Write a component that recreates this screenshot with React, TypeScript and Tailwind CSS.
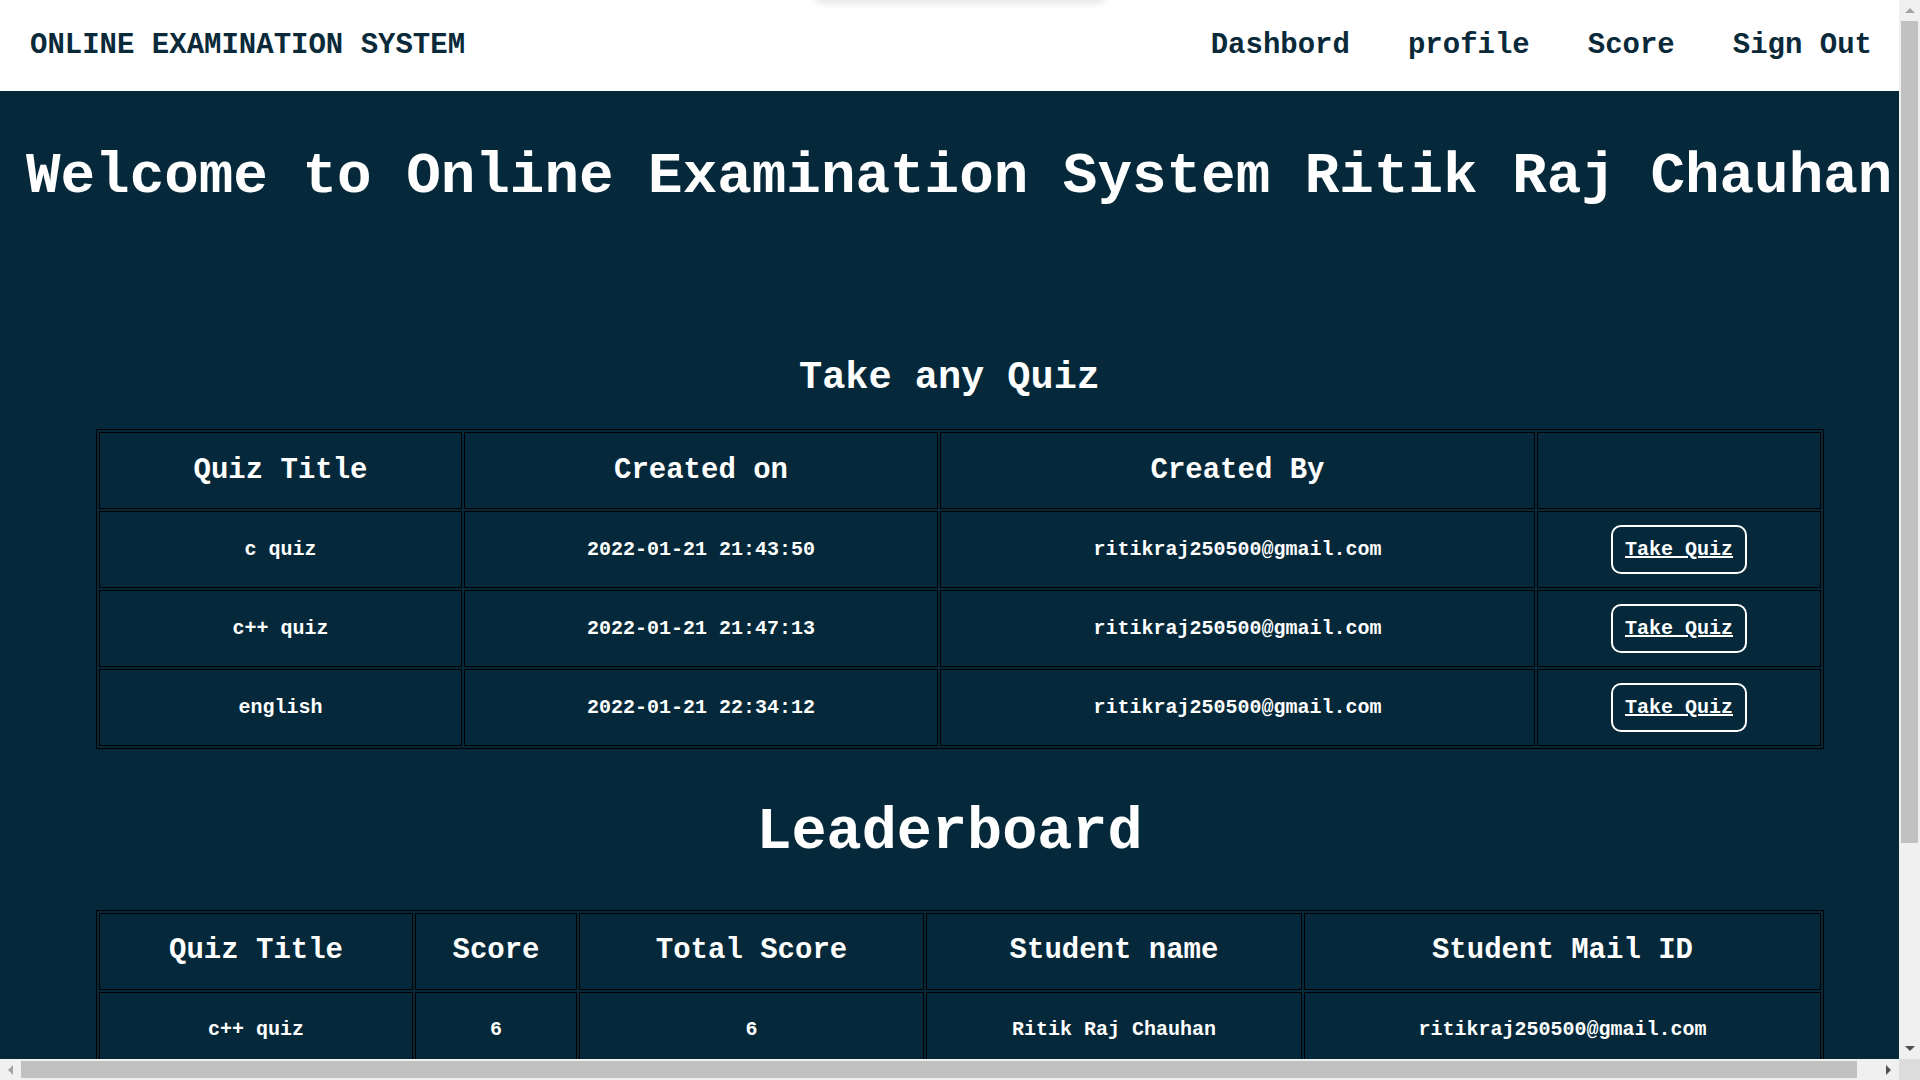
import React from "react";

const quizzes = [
  { title: "c quiz", created: "2022-01-21 21:43:50", by: "ritikraj250500@gmail.com" },
  { title: "c++ quiz", created: "2022-01-21 21:47:13", by: "ritikraj250500@gmail.com" },
  { title: "english", created: "2022-01-21 22:34:12", by: "ritikraj250500@gmail.com" },
];

const scores = [
  { title: "c++ quiz", score: 6, total: 6, name: "Ritik Raj Chauhan", mail: "ritikraj250500@gmail.com" },
];

const navLinks = ["Dashbord", "profile", "Score", "Sign Out"];

const th = "h-[77px] border border-black text-[29px] font-bold text-center align-middle p-0";
const td = "h-[77px] border border-black text-[20px] font-bold text-center align-middle p-0";

function Navbar() {
  return (
    <header className="relative flex h-[91px] shrink-0 items-center justify-between bg-white pl-[30px] pr-[27px] text-[29px] text-[#0a2a3a]">
      {/* stray shadow peeking in at the top */}
      <div className="absolute left-[815px] top-[-30px] h-[30px] w-[290px] rounded-b-md bg-white shadow-[0_2px_10px_rgba(0,0,0,0.13)]" />
      <span className="font-bold">ONLINE EXAMINATION SYSTEM</span>
      <nav className="flex gap-[58px] font-bold">
        {navLinks.map((l) => (
          <a key={l} href="#" className="cursor-pointer">
            {l}
          </a>
        ))}
      </nav>
    </header>
  );
}

function QuizTable() {
  return (
    <div className="pl-[96px]">
      <table className="w-[1728px] table-fixed border-separate border-spacing-[2px] border border-black">
        <thead>
          <tr>
            <th className={`${th} w-[363px]`}>Quiz Title</th>
            <th className={`${th} w-[474px]`}>Created on</th>
            <th className={`${th} w-[595px]`}>Created By</th>
            <th className={`${th} w-[284px]`}></th>
          </tr>
        </thead>
        <tbody>
          {quizzes.map((q) => (
            <tr key={q.title}>
              <td className={td}>{q.title}</td>
              <td className={td}>{q.created}</td>
              <td className={td}>{q.by}</td>
              <td className={td}>
                <button className="inline-flex h-[49px] items-center rounded-[10px] border-2 border-white px-[12px] font-bold underline">
                  Take Quiz
                </button>
              </td>
            </tr>
          ))}
        </tbody>
      </table>
    </div>
  );
}

function Leaderboard() {
  return (
    <div className="pl-[96px]">
      <table className="w-[1728px] table-fixed border-separate border-spacing-[2px] border border-black">
        <thead>
          <tr>
            <th className={`${th} w-[314px]`}>Quiz Title</th>
            <th className={`${th} w-[162px]`}>Score</th>
            <th className={`${th} w-[345px]`}>Total Score</th>
            <th className={`${th} w-[376px]`}>Student name</th>
            <th className={`${th} w-[517px]`}>Student Mail ID</th>
          </tr>
        </thead>
        <tbody>
          {scores.map((s, i) => (
            <tr key={i}>
              <td className={td}>{s.title}</td>
              <td className={td}>{s.score}</td>
              <td className={td}>{s.total}</td>
              <td className={td}>{s.name}</td>
              <td className={td}>{s.mail}</td>
            </tr>
          ))}
        </tbody>
      </table>
    </div>
  );
}

function VScrollbar() {
  return (
    <div className="flex w-[21px] shrink-0 flex-col bg-[#f0f0f0]">
      <div className="flex h-[21px] items-center justify-center">
        <div className="h-0 w-0 border-x-[5px] border-b-[5px] border-x-transparent border-b-[#a3a3a3]" />
      </div>
      <div className="flex-1 px-[2px]">
        <div className="h-[822px] bg-[#c1c1c1]" />
      </div>
      <div className="flex h-[21px] items-center justify-center">
        <div className="h-0 w-0 border-x-[5px] border-t-[5px] border-x-transparent border-t-[#505050]" />
      </div>
    </div>
  );
}

function HScrollbar() {
  return (
    <div className="flex h-[21px] shrink-0">
      <div className="flex flex-1 bg-[#f0f0f0]">
        <div className="flex w-[21px] items-center justify-center">
          <div className="h-0 w-0 border-y-[5px] border-r-[5px] border-y-transparent border-r-[#a3a3a3]" />
        </div>
        <div className="flex-1 py-[2px]">
          <div className="h-full w-[1836px] bg-[#c1c1c1]" />
        </div>
        <div className="flex w-[21px] items-center justify-center">
          <div className="h-0 w-0 border-y-[5px] border-l-[5px] border-y-transparent border-l-[#505050]" />
        </div>
      </div>
      <div className="w-[21px] bg-[#dcdcdc]" />
    </div>
  );
}

export default function App() {
  return (
    <div className="flex h-screen w-screen flex-col overflow-hidden font-['Liberation_Mono','Courier_New',monospace]">
      <div className="flex min-h-0 flex-1">
        <div className="flex min-w-0 flex-1 flex-col overflow-hidden bg-[#05293a]">
          <Navbar />
          <main className="flex flex-col text-white">
            <h1 className="mt-[57px] whitespace-nowrap pl-[26px] text-[57.6px] font-bold leading-none">
              Welcome to Online Examination System Ritik Raj Chauhan
            </h1>
            <h2 className="mt-[153px] text-center text-[38.6px] font-bold leading-none">Take any Quiz</h2>
            <div className="mt-[32px]">
              <QuizTable />
            </div>
            <h2 className="mt-[55px] text-center text-[58.5px] font-bold leading-none">Leaderboard</h2>
            <div className="mt-[47px]">
              <Leaderboard />
            </div>
          </main>
        </div>
        <VScrollbar />
      </div>
      <HScrollbar />
    </div>
  );
}
